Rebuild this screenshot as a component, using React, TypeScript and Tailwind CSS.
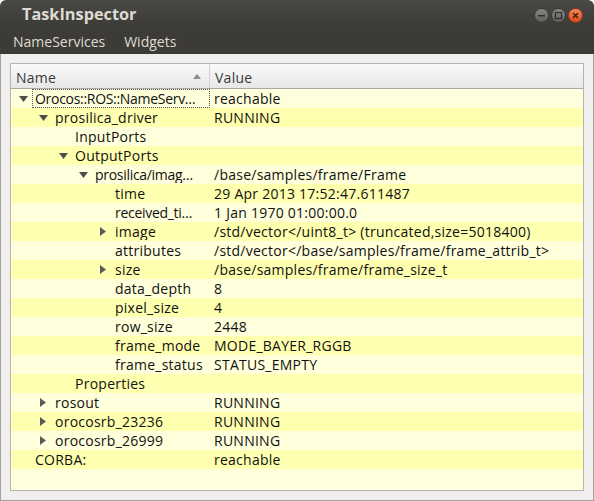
import React from "react";

type Row = { level: number; arrow?: "down" | "right"; name: string; value: string; focus?: boolean; tight?: boolean };

const rows: Row[] = [
  { level: 0, arrow: "down", name: "Orocos::ROS::NameServ…", value: "reachable", focus: true, tight: true },
  { level: 1, arrow: "down", name: "prosilica_driver", value: "RUNNING" },
  { level: 2, name: "InputPorts", value: "" },
  { level: 2, arrow: "down", name: "OutputPorts", value: "" },
  { level: 3, arrow: "down", name: "prosilica/imag…", value: "/base/samples/frame/Frame", tight: true },
  { level: 4, name: "time", value: "29 Apr 2013 17:52:47.611487" },
  { level: 4, name: "received_ti…", value: "1 Jan 1970 01:00:00.0", tight: true },
  { level: 4, arrow: "right", name: "image", value: "/std/vector</uint8_t> (truncated,size=5018400)" },
  { level: 4, name: "attributes", value: "/std/vector</base/samples/frame/frame_attrib_t>" },
  { level: 4, arrow: "right", name: "size", value: "/base/samples/frame/frame_size_t" },
  { level: 4, name: "data_depth", value: "8" },
  { level: 4, name: "pixel_size", value: "4" },
  { level: 4, name: "row_size", value: "2448" },
  { level: 4, name: "frame_mode", value: "MODE_BAYER_RGGB" },
  { level: 4, name: "frame_status", value: "STATUS_EMPTY" },
  { level: 2, name: "Properties", value: "" },
  { level: 1, arrow: "right", name: "rosout", value: "RUNNING" },
  { level: 1, arrow: "right", name: "orocosrb_23236", value: "RUNNING" },
  { level: 1, arrow: "right", name: "orocosrb_26999", value: "RUNNING" },
  { level: 0, name: "CORBA:", value: "reachable" },
];

const indents = ["w-0", "w-[20px]", "w-[40px]", "w-[60px]", "w-[80px]"];

function Arrow({ dir }: { dir?: "down" | "right" }) {
  if (dir === "down")
    return (
      <svg width="9" height="6" viewBox="0 0 9 6" className="ml-[8px]">
        <path d="M0 0 L9 0 L4.5 6 Z" fill="#4d4d4d" />
      </svg>
    );
  if (dir === "right")
    return (
      <svg width="6" height="9" viewBox="0 0 6 9" className="ml-[9px]">
        <path d="M0 0 L6 4.5 L0 9 Z" fill="#5a5a5a" />
      </svg>
    );
  return null;
}

function WinButton({ kind }: { kind: "min" | "max" | "close" }) {
  const isClose = kind === "close";
  return (
    <div
      className={
        isClose
          ? "w-[15px] h-[15px] rounded-full bg-gradient-to-b from-[#f58a5c] to-[#dc4813] border border-[#8f3a1a] flex items-center justify-center"
          : "w-[15px] h-[15px] rounded-full bg-gradient-to-b from-[#8a8985] to-[#5e5d59] border border-[#3a3935] flex items-center justify-center"
      }
    >
      <svg width="9" height="9" viewBox="0 0 9 9">
        {kind === "min" && <rect x="1" y="4" width="7" height="1.4" fill="#2e2d2a" />}
        {kind === "max" && <rect x="1.5" y="1.5" width="6" height="6" fill="none" stroke="#2e2d2a" strokeWidth="1.2" />}
        {kind === "close" && (
          <path d="M2 2 L7 7 M7 2 L2 7" stroke="#3b160a" strokeWidth="1.3" />
        )}
      </svg>
    </div>
  );
}

export default function App() {
  return (
    <div
      className="w-[594px] h-[501px] bg-white overflow-hidden"
      style={{ fontFamily: '"Open Sans", "DejaVu Sans", sans-serif' }}
    >
      <div className="w-[594px] h-[501px] rounded-t-[6px] overflow-hidden flex flex-col">
        {/* Title + menu */}
        <div className="h-[54px] bg-gradient-to-b from-[#4a4945] via-[#3c3b37] to-[#3c3b37] flex flex-col">
          <div className="h-[31px] flex items-center justify-between pl-[22px] pr-[11px]">
            <span className="text-[16.3px] font-bold text-[#dfdbd2] leading-none -mt-[2px]">TaskInspector</span>
            <div className="flex items-center gap-[2px]">
              <WinButton kind="min" />
              <WinButton kind="max" />
              <WinButton kind="close" />
            </div>
          </div>
          <div className="h-[20px] flex items-center gap-[19px] pl-[13px] text-[14px] text-[#dfdbd2]">
            <span>NameServices</span>
            <span>Widgets</span>
          </div>
        </div>
        {/* Content */}
        <div className="flex-1 bg-[#f0efee] border-x border-b border-[#a3a3a3] p-[9px]">
          <div className="h-[428px] border border-[#b4b4b4] bg-[#ffffdc] flex flex-col text-[14px] tracking-[0.25px] text-[#111111]">
            <div className="h-[25px] flex border-b border-[#aaaaaa] bg-gradient-to-b from-[#fafafa] to-[#e7e7e7] shrink-0">
              <div className="w-[199px] flex items-center pl-[5px] pr-[8px] pt-[3px] border-r border-[#d2d2d2]">
                <span className="flex-1 text-[#3a3a3a]">Name</span>
                <svg width="8" height="5" viewBox="0 0 8 5" className="-mt-[3px]">
                  <path d="M0 5 L4 0 L8 5 Z" fill="#8c8c8c" />
                </svg>
              </div>
              <div className="flex-1 flex items-center pl-[5px] pt-[3px] text-[#3a3a3a]">Value</div>
            </div>
            <div className="flex flex-col">
              {rows.map((r, i) => (
                <div
                  key={i}
                  className={
                    "h-[19px] flex items-center " + (i % 2 === 0 ? "bg-[#ffffdc]" : "bg-[#ffffb0]")
                  }
                >
                  <div className="w-[199px] h-full flex items-center shrink-0">
                    <div className={indents[r.level] + " shrink-0"} />
                    <div className="w-[21px] shrink-0 flex items-center">
                      <Arrow dir={r.arrow} />
                    </div>
                    <div
                      className={
                        "flex-1 h-full flex items-center pl-[2px] whitespace-nowrap overflow-hidden " +
                        (r.tight ? "tracking-[-0.3px] " : "") +
                        (r.focus ? "border border-dotted border-[#555555]" : "border border-transparent")
                      }
                    >
                      {r.name}
                    </div>
                  </div>
                  <div className="flex-1 pl-[4px] whitespace-nowrap overflow-hidden">{r.value}</div>
                </div>
              ))}
            </div>
          </div>
        </div>
      </div>
    </div>
  );
}
